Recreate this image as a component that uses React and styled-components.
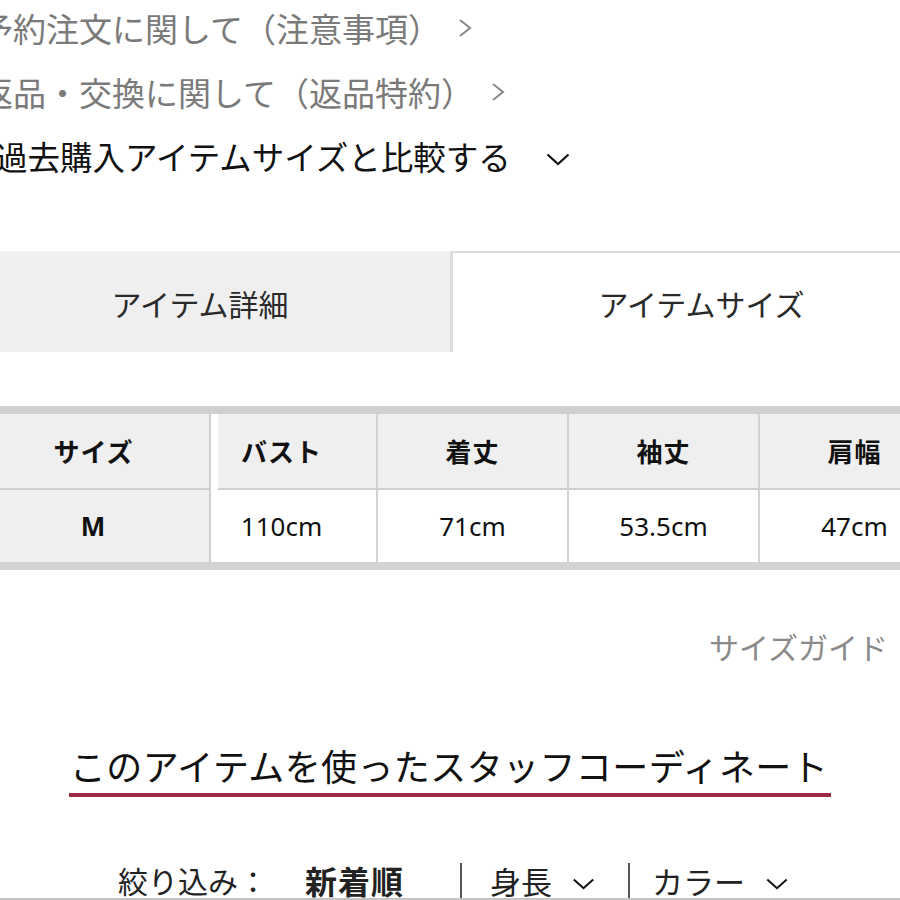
import React from 'react';
import styled, { createGlobalStyle } from 'styled-components';

const GlobalStyle = createGlobalStyle`
  * { box-sizing: border-box; }
  html, body {
    margin: 0;
    padding: 0;
    background: #fff;
  }
  body {
    width: 900px;
    height: 900px;
    overflow: hidden;
    font-family: "Noto Sans", "Noto Sans CJK JP", sans-serif;
    color: #111;
  }
`;

const links = [
  { text: '予約注文に関して（注意事項）', size: 33, indent: 30, arrow: 'right' },
  { text: '返品・交換に関して（返品特約）', size: 33, indent: 30, arrow: 'right' },
  { text: '過去購入アイテムサイズと比較する', size: 32.5, indent: 45, arrow: 'down', dark: true },
];

const sizeCols = [
  { label: 'バスト', value: '110cm' },
  { label: '着丈', value: '71cm' },
  { label: '袖丈', value: '53.5cm' },
  { label: '肩幅', value: '47cm' },
];

const ChevronRight = ({ color = '#888' }) => (
  <svg width="14" height="20" viewBox="0 0 14 20">
    <polyline points="2,2 12,10 2,18" fill="none" stroke={color} strokeWidth="2" />
  </svg>
);

const ChevronDown = ({ w = 24, h = 13, color = '#111' }) => (
  <svg width={w} height={h} viewBox="0 0 24 13">
    <polyline points="1.5,1.5 12,11 22.5,1.5" fill="none" stroke={color} strokeWidth="2.2" />
  </svg>
);

const App = () => (
  <>
    <GlobalStyle />
    <Page>
      <LinkList>
        {links.map((l) => (
          <LinkItem key={l.text} $size={l.size} $indent={l.indent} $dark={l.dark}>
            <span>{l.text}</span>
            <ArrowBox $down={l.arrow === 'down'}>
              {l.arrow === 'down' ? <ChevronDown /> : <ChevronRight />}
            </ArrowBox>
          </LinkItem>
        ))}
      </LinkList>

      <Tabs>
        <Tab>アイテム詳細</Tab>
        <Tab $active>アイテムサイズ</Tab>
      </Tabs>

      <TableWrap>
        <StickyCol>
          <StickyCell $head>サイズ</StickyCell>
          <StickyCell>M</StickyCell>
        </StickyCol>
        <ScrollArea>
          <SizeGrid>
            {sizeCols.map((c) => (
              <HeadCell key={c.label}>{c.label}</HeadCell>
            ))}
            {sizeCols.map((c) => (
              <BodyCell key={c.value}>{c.value}</BodyCell>
            ))}
          </SizeGrid>
        </ScrollArea>
      </TableWrap>

      <GuideRow>
        <GuideLink>サイズガイド</GuideLink>
      </GuideRow>

      <HeadingRow>
        <Heading>このアイテムを使ったスタッフコーディネート</Heading>
      </HeadingRow>

      <FilterBar>
        <FilterLabel>絞り込み：</FilterLabel>
        <SortActive>新着順</SortActive>
        <Divider $gap={56} />
        <FilterOption $gap={28}>
          身長
          <ChevronDown w={23} h={12} />
        </FilterOption>
        <Divider $gap={33} />
        <FilterOption $gap={22}>
          カラー
          <ChevronDown w={24} h={12} />
        </FilterOption>
      </FilterBar>
    </Page>
  </>
);

export default App;

const Page = styled.div`
  width: 1000px;
  margin-left: -50px;
`;

const LinkList = styled.ul`
  list-style: none;
  margin: -4px 0 0;
  padding: 0;
`;

const LinkItem = styled.li`
  display: flex;
  align-items: center;
  height: 64px;
  padding-left: ${(p) => p.$indent}px;
  font-size: ${(p) => p.$size}px;
  color: ${(p) => (p.$dark ? '#111' : '#7a7a7a')};
  white-space: nowrap;
`;

const ArrowBox = styled.span`
  display: flex;
  align-items: center;
  margin-left: ${(p) => (p.$down ? '35px' : '17px')};
  margin-top: ${(p) => (p.$down ? '6px' : '0')};
`;

const Tabs = styled.div`
  display: flex;
  margin-top: 63px;
  height: 101px;
`;

const Tab = styled.div`
  width: 50%;
  display: flex;
  align-items: center;
  justify-content: center;
  font-size: 30px;
  color: #2a2a2a;
  background: ${(p) => (p.$active ? '#fff' : '#efefef')};
  border-top: 2px solid ${(p) => (p.$active ? '#dcdcdc' : '#efefef')};
  border-left: ${(p) => (p.$active ? '3px solid #dcdcdc' : 'none')};
`;

const TableWrap = styled.div`
  display: flex;
  margin-top: 54px;
  border-top: 8px solid #cfcfcf;
  border-bottom: 8px solid #d3d3d3;
`;

const StickyCol = styled.div`
  width: 261px;
  flex-shrink: 0;
  border-right: 2px solid #cfcfcf;
  margin-right: 7px;
  background: #efefef;
`;

const StickyCell = styled.div`
  display: flex;
  align-items: center;
  justify-content: center;
  height: ${(p) => (p.$head ? '76px' : '72px')};
  padding-left: 28px;
  border-bottom: ${(p) => (p.$head ? '2px solid #cfcfcf' : 'none')};
  font-size: 26px;
  font-weight: 700;
  letter-spacing: 1px;
`;

const ScrollArea = styled.div`
  flex: 1;
  overflow: hidden;
`;

const SizeGrid = styled.div`
  display: grid;
  grid-template-columns: repeat(4, 191px);
  margin-left: -31px;
`;

const HeadCell = styled.div`
  display: flex;
  align-items: center;
  justify-content: center;
  height: 76px;
  background: #efefef;
  border-right: 2px solid #d3d3d3;
  border-bottom: 2px solid #cfcfcf;
  font-size: 26px;
  font-weight: 700;
  letter-spacing: 1px;
`;

const BodyCell = styled.div`
  display: flex;
  align-items: center;
  justify-content: center;
  height: 72px;
  background: #fff;
  border-right: 2px solid #d3d3d3;
  font-size: 26px;
`;

const GuideRow = styled.div`
  display: flex;
  justify-content: flex-end;
  margin-top: 58px;
  padding-right: 62px;
`;

const GuideLink = styled.span`
  font-size: 30px;
  line-height: 40px;
  color: #8a8a8a;
`;

const HeadingRow = styled.div`
  display: flex;
  justify-content: center;
  margin-top: 78px;
`;

const Heading = styled.h2`
  margin: 0;
  padding: 0 3px 3px 1px;
  font-size: 36px;
  line-height: 44px;
  font-weight: 400;
  letter-spacing: 0.4px;
  color: #111;
  border-bottom: 4px solid #9c2b45;
  white-space: nowrap;
`;

const FilterBar = styled.div`
  display: flex;
  align-items: center;
  height: 42px;
  margin-top: 61px;
  padding: 8px 0 0 168px;
  border-bottom: 2px solid #c4c4c4;
  color: #222;
  line-height: 32px;
  white-space: nowrap;
`;

const FilterLabel = styled.span`
  font-size: 30px;
`;

const SortActive = styled.span`
  margin-left: 37px;
  font-size: 32px;
  font-weight: 700;
  letter-spacing: 1px;
`;

const Divider = styled.span`
  align-self: flex-end;
  width: 2px;
  height: 35px;
  margin-left: ${(p) => p.$gap}px;
  background: #555;
`;

const FilterOption = styled.span`
  display: flex;
  align-items: center;
  gap: 20px;
  margin-left: ${(p) => p.$gap}px;
  font-size: 31px;

  svg {
    margin-top: 4px;
  }
`;
